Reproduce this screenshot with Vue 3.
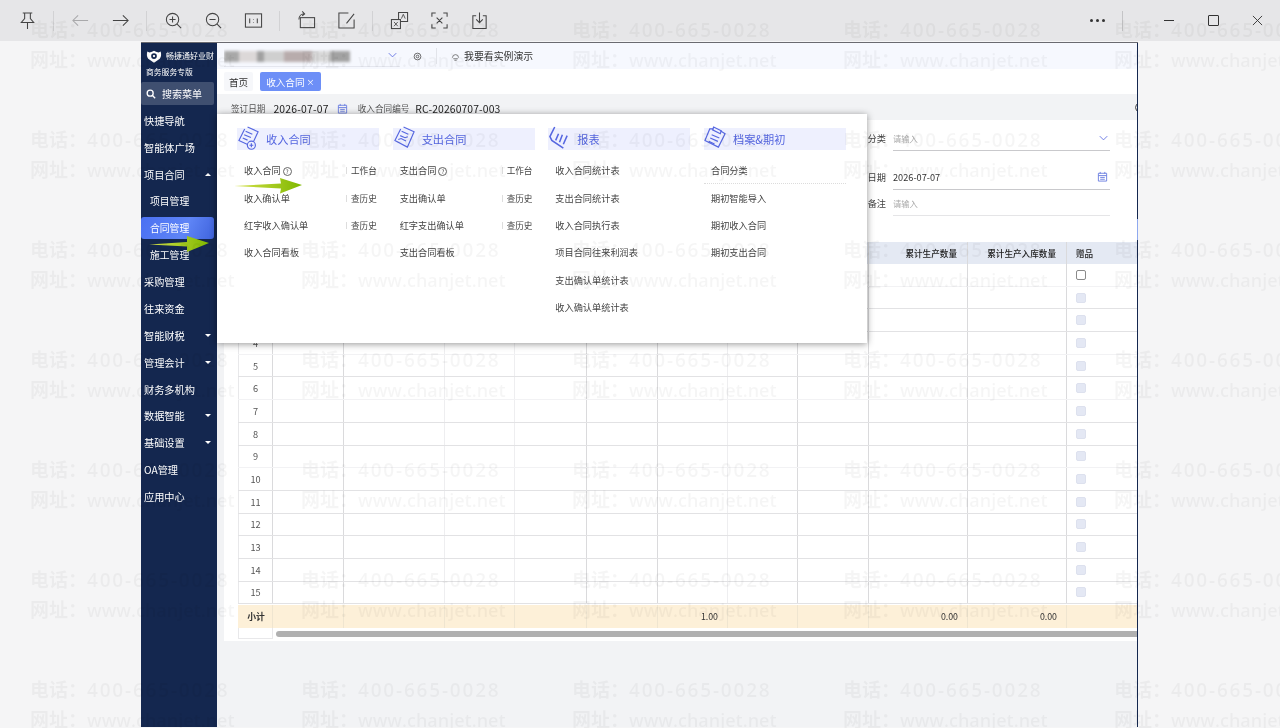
<template>
  <div class="viewer">
    <!-- viewer toolbar -->
    <div class="toolbar">
      <button class="tool">
        <svg viewBox="0 0 20 20"><path d="M5 2h10M7 2v6l-3.500 4h13L13 8V2M10 12v7" /></svg>
      </button>
      <i class="sep"></i>
      <button class="tool muted">
        <svg viewBox="0 0 20 20"><path d="M18 10H2M7.500 4.500 2 10l5.500 5.500" /></svg>
      </button>
      <button class="tool">
        <svg viewBox="0 0 20 20"><path d="M2 10h16M12.500 4.500 18 10l-5.500 5.500" /></svg>
      </button>
      <i class="sep"></i>
      <button class="tool">
        <svg viewBox="0 0 20 20"><circle cx="9" cy="9" r="6.500" /><path d="M9 5.800v6.400M5.800 9h6.400M13.800 13.800 18 18" /></svg>
      </button>
      <button class="tool">
        <svg viewBox="0 0 20 20"><circle cx="9" cy="9" r="6.500" /><path d="M5.800 9h6.400M13.800 13.800 18 18" /></svg>
      </button>
      <button class="tool">
        <svg viewBox="0 0 20 20"><rect x="1.500" y="3" width="17" height="14" /><path d="M6 8v5M14 8v5M10 8.500v.5M10 11.500v.5" /></svg>
      </button>
      <i class="sep"></i>
      <button class="tool">
        <svg viewBox="0 0 20 20"><rect x="3.500" y="7" width="15" height="10.500" /><path d="M2 9C2 5 4.500 3 8 3M5.500 .5 8 3 5.500 5" /></svg>
      </button>
      <button class="tool">
        <svg viewBox="0 0 20 20"><path d="M18 9v9H2V2h10M18 3l-8 10" /></svg>
      </button>
      <i class="sep"></i>
      <button class="tool">
        <svg viewBox="0 0 20 20"><path d="M9 9V1.500h9.500V11H11" /><rect x="1.500" y="9" width="9.500" height="9.500" /><path d="M12 8l2-4.500L16 8M4.200 11.500l4 4.500M8.200 11.500l-4 4.500" stroke-width=".9" /></svg>
      </button>
      <button class="tool">
        <svg viewBox="0 0 20 20"><path d="M2 6V2h4M14 2h4v4M18 14v4h-4M6 18H2v-4M7 7l6 6M13 7l-6 6" /></svg>
      </button>
      <button class="tool">
        <svg viewBox="0 0 20 20"><path d="M6.500 5H3v13.500h14V5h-3.500M10 1.500V12M6.500 8.800 10 12.300l3.500-3.500" /></svg>
      </button>
      <button class="tool dots"><b></b><b></b><b></b></button>
      <i class="sep sep-right"></i>
      <button class="win"><span class="win-min"></span></button>
      <button class="win"><span class="win-max"></span></button>
      <button class="win">
        <svg viewBox="0 0 12 12"><path d="M1 1l10 10M11 1 1 11" /></svg>
      </button>
    </div>

    <div class="stage">
      <div class="doc">
        <!-- left navigation -->
        <aside class="sidebar">
          <div class="brand">
            <div class="brand-top">
              <svg class="brand-logo" viewBox="0 0 18 14">
                <path d="M9 14 2.500 9.500C1 8 .5 5 1.500 1.500 3.500 3 5 2.500 9 .5c4 2 5.500 2.500 7.500 1 1 3.500.5 6.500-1 8z" fill="#fff" />
                <circle cx="9" cy="6.500" r="3.200" fill="#14274f" />
                <circle cx="9" cy="6.500" r="1.300" fill="#fff" />
              </svg>
              <span>畅捷通好业财</span>
            </div>
            <div class="brand-sub">商务服务专版</div>
          </div>
          <div class="search">
            <svg viewBox="0 0 12 12"><circle cx="5" cy="5" r="3.600" /><path d="M7.800 7.800 11 11" /></svg>
            <span>搜索菜单</span>
          </div>
          <nav class="nav">
            <div
              v-for="item in navItems"
              :key="item.label"
              class="nav-item"
              :class="{ sub: item.sub, active: item.active }"
            >
              <span>{{ item.label }}</span>
              <i v-if="item.caret" class="caret" :class="item.caret"></i>
            </div>
          </nav>
        </aside>

        <main class="main">
          <header class="topbar">
            <div class="company">
              <div class="company-blur"></div>
              <svg class="chev" viewBox="0 0 12 8"><path d="M1 1.500 6 6.500l5-5" /></svg>
            </div>
            <svg class="gear" viewBox="0 0 12 12"><circle cx="6" cy="6" r="4.500" /><circle cx="6" cy="6" r="1.800" /></svg>
            <i class="top-sep"></i>
            <svg class="bulb" viewBox="0 0 12 12"><path d="M2 7.500a4 4 0 1 1 8 0M3 9h6M4.500 11h3" /></svg>
            <span class="demo">我要看实例演示</span>
          </header>

          <div class="tabs">
            <span class="tab">首页</span>
            <span class="tab tab-on">收入合同 <small>×</small></span>
          </div>

          <div class="meta">
            <span class="meta-label">签订日期</span>
            <span class="meta-value date">2026-07-07</span>
            <svg class="cal" viewBox="0 0 12 12"><path d="M1.500 2.500h9v8.500h-9zM1.500 5h9M3.500 1v2M8.500 1v2M3.500 7h5M3.500 9h5" /></svg>
            <span class="meta-label no">收入合同编号</span>
            <span class="meta-value">RC-20260707-003</span>
            <i class="meta-clip"></i>
          </div>

          <section class="panel">
            <div class="form">
              <div class="field f1">
                <label>合同分类</label>
                <div class="input ph">请输入
                  <svg class="chev" viewBox="0 0 12 8"><path d="M1 1.500 6 6.500l5-5" /></svg>
                </div>
              </div>
              <div class="field f2">
                <label>签约日期</label>
                <div class="input">2026-07-07
                  <svg class="cal" viewBox="0 0 12 12"><path d="M1.500 2.500h9v8.500h-9zM1.500 5h9M3.500 1v2M8.500 1v2M3.500 7h5M3.500 9h5" /></svg>
                </div>
              </div>
              <div class="field f3">
                <label>备注</label>
                <div class="input ph thin">请输入</div>
              </div>
            </div>

            <div class="table">
              <div class="row head">
                <div
                  v-for="(c, i) in columns"
                  :key="i"
                  class="cell"
                  :class="{ faint: c.faint, end: c.end }"
                  :style="{ width: c.w + 'px' }"
                >{{ c.title }}</div>
              </div>
              <div v-for="n in 15" :key="n" class="row body" :class="{ soft: softRows.includes(n) }">
                <div v-for="(c, i) in columns" :key="i" class="cell" :class="{ faint: c.faint }" :style="{ width: c.w + 'px' }">
                  <template v-if="i === 0">{{ n }}</template>
                  <i v-else-if="i === 11" class="check" :class="{ open: n === 1 }"></i>
                </div>
              </div>
              <div class="row total">
                <div v-for="(c, i) in columns" :key="i" class="cell" :class="{ faint: c.faint }" :style="{ width: c.w + 'px' }">{{ c.total }}</div>
              </div>
              <div class="scroll-row">
                <div class="scroll-cell"></div>
                <div class="scroll-thumb"></div>
              </div>
            </div>
          </section>
        </main>
        <div class="edge"></div>

        <!-- dropdown over the page -->
        <div class="popup">
          <div v-for="group in groups" :key="group.title" class="group">
            <div class="group-head">
              <svg viewBox="0 0 24 26" v-html="group.icon"></svg>
              <span>{{ group.title }}</span>
            </div>
            <div
              v-for="row in group.rows"
              :key="row.label"
              class="group-row"
              :class="{ dashed: row.dashed }"
            >
              <span>{{ row.label }}<i v-if="row.help" class="help">?</i></span>
              <span v-if="row.action" class="action">{{ row.action }}</span>
            </div>
          </div>
        </div>

        <svg class="arrow arrow-a" viewBox="0 0 70 18">
          <defs>
            <linearGradient id="ga" x1="0" x2="1" y1="0" y2="0">
              <stop offset="0" stop-color="#d6e24a" />
              <stop offset="1" stop-color="#7fb800" />
            </linearGradient>
          </defs>
          <path d="M0 9 47 6.500 46 1 68 8 46 16.500 47 11.500z" fill="url(#ga)" />
        </svg>
        <svg class="arrow arrow-b" viewBox="0 0 70 18">
          <path d="M0 9.500 38 7 38 1 60 8 38 17 38 11.500z" fill="url(#ga)" />
        </svg>
      </div>
    </div>

    <!-- watermark across the whole screen -->
    <div class="watermark">
      <div v-for="n in 35" :key="n" class="mark">
        <div class="mark-tel"><span>电话：</span>400-665-0028</div>
        <div class="mark-web"><span>网址：</span>www.chanjet.net</div>
      </div>
    </div>
  </div>
</template>

<script setup>
const navItems = [
  { label: '快捷导航' },
  { label: '智能体广场' },
  { label: '项目合同', caret: 'up' },
  { label: '项目管理', sub: true },
  { label: '合同管理', sub: true, active: true },
  { label: '施工管理', sub: true },
  { label: '采购管理' },
  { label: '往来资金' },
  { label: '智能财税', caret: 'down' },
  { label: '管理会计', caret: 'down' },
  { label: '财务多机构' },
  { label: '数据智能', caret: 'down' },
  { label: '基础设置', caret: 'down' },
  { label: 'OA管理' },
  { label: '应用中心' },
]

const columns = [
  { w: 35, total: '小计' },
  { w: 71 },
  { w: 101, faint: true },
  { w: 70, faint: true },
  { w: 72 },
  { w: 71 },
  { w: 70, total: '1.00', faint: true },
  { w: 70 },
  { w: 71 },
  { w: 99, title: '累计生产数量', total: '0.00', end: true },
  { w: 99, title: '累计生产入库数量', total: '0.00', end: true },
  { w: 80, title: '赠品' },
]

const softRows = [1, 4, 6, 9]

const docLines = '<path d="M9 5.500l7 3M7.500 9l7 3M6 12.500l5 2.200"/>'
const groups = [
  {
    title: '收入合同',
    icon: `<path d="M11 1 22 6 15 21 2 15 8 3"/>${docLines}<circle cx="15" cy="20" r="4.200" fill="#eef0fe"/><path d="M15 18v4M13 20h4"/>`,
    rows: [
      { label: '收入合同', help: true, action: '工作台' },
      { label: '收入确认单', action: '查历史' },
      { label: '红字收入确认单', action: '查历史' },
      { label: '收入合同看板' },
    ],
  },
  {
    title: '支出合同',
    icon: '<path d="M11 1 22 6 15 22 2 15 8 3"/><path d="M9 5.500l7 3M7.500 10l5 2.200 3-1M5.500 14l3-1 5 2.500"/>',
    rows: [
      { label: '支出合同', help: true, action: '工作台' },
      { label: '支出确认单', action: '查历史' },
      { label: '红字支出确认单', action: '查历史' },
      { label: '支出合同看板' },
    ],
  },
  {
    title: '报表',
    icon: '<path d="M7 1 2 11l2 4 12 8M8 15l3-7M12 17l3-8M16 19l4-9" stroke-width="1.600"/>',
    rows: [
      { label: '收入合同统计表' },
      { label: '支出合同统计表' },
      { label: '收入合同执行表' },
      { label: '项目合同往来利润表' },
      { label: '支出确认单统计表' },
      { label: '收入确认单统计表' },
    ],
  },
  {
    title: '档案&期初',
    icon: '<path d="M10 3 6 3 1 15l14 7 7-14-5-3"/><path d="M10 1l8 4-1 3-8-4zM8 9l8 3.500M6.500 12.500l8 3.500M5 16l6 2.800"/>',
    rows: [
      { label: '合同分类', dashed: true },
      { label: '期初智能导入' },
      { label: '期初收入合同' },
      { label: '期初支出合同' },
    ],
  },
]
</script>

<style>
html,
body {
  margin: 0;
  background: #f5f5f6;
}
body {
  font-family: "Noto Sans CJK SC", "Noto Sans", sans-serif;
}
</style>

<style scoped>
.viewer {
  position: relative;
  width: 1280px;
  height: 728px;
  overflow: hidden;
  display: flex;
  flex-direction: column;
  background: #f5f5f6;
  color: #333;
  filter: blur(0.4px);
}

/* toolbar */
.toolbar {
  flex: none;
  height: 41px;
  padding-left: 7px;
  display: flex;
  align-items: center;
  background: #e6e6e8;
}
.tool {
  flex: none;
  width: 40px;
  height: 30px;
  padding: 0;
  border: 0;
  background: none;
  display: flex;
  align-items: center;
  justify-content: center;
}
.tool svg {
  width: 19px;
  height: 19px;
  fill: none;
  stroke: #444;
  stroke-width: 1.100;
}
.tool.muted svg {
  stroke: #a9a9ab;
}
.sep {
  flex: none;
  width: 1px;
  height: 20px;
  margin: 0 6px;
  background: #d2d2d4;
}
.dots {
  margin-left: auto;
  gap: 3px;
}
.dots b {
  width: 3px;
  height: 3px;
  border-radius: 50%;
  background: #333;
}
.sep-right {
  margin: 0 24px 0 5px;
  background: #c4c4c6;
}
.win {
  flex: none;
  width: 44px;
  height: 30px;
  padding: 0;
  border: 0;
  background: none;
  display: flex;
  align-items: center;
  justify-content: center;
}
.win:last-child {
  margin-right: 1px;
}
.win svg {
  width: 11px;
  height: 11px;
  fill: none;
  stroke: #333;
}
.win-min {
  width: 10px;
  height: 1px;
  background: #333;
}
.win-max {
  width: 9px;
  height: 9px;
  border: 1px solid #333;
  border-radius: 1px;
}

/* document */
.stage {
  flex: 1;
  padding: 1px 0 1px 141px;
  min-height: 0;
  display: flex;
}
.doc {
  position: relative;
  width: 997px;
  display: flex;
  border-top: 1px solid #6a6a70;
}

.sidebar {
  flex: none;
  width: 76px;
  background: #14274f;
  color: #fff;
}
.brand {
  height: 39px;
  padding: 6px 0 0 5px;
  box-sizing: border-box;
}
.brand-top {
  display: flex;
  align-items: center;
  gap: 4px;
  font-size: 8px;
  line-height: 14px;
  white-space: nowrap;
}
.brand-logo {
  flex: none;
  width: 16px;
  height: 13px;
}
.brand-sub {
  margin-top: 3px;
  font-size: 7.800px;
  line-height: 12px;
}
.search {
  height: 23px;
  width: 73px;
  display: flex;
  align-items: center;
  gap: 6px;
  padding-left: 5px;
  box-sizing: border-box;
  background: #3f4f70;
  border-radius: 2px;
  font-size: 10px;
}
.search svg {
  width: 10px;
  height: 10px;
  fill: none;
  stroke: #fff;
  stroke-width: 1.600;
}
.nav {
  margin-top: 2.200px;
}
.nav-item {
  position: relative;
  height: 26.850px;
  padding-left: 3px;
  display: flex;
  align-items: center;
  font-size: 10.200px;
}
.nav-item.sub {
  padding-left: 9px;
  font-size: 9.800px;
}
.nav-item.active {
  height: 21.850px;
  margin: 2.500px 3px 2.500px 0;
  border-radius: 3px;
  background: linear-gradient(115deg, #4a70f2 0%, #5f85f6 60%, #3f63dd 100%);
}
.caret {
  position: absolute;
  left: 64px;
  top: 12px;
  border-left: 3px solid transparent;
  border-right: 3px solid transparent;
}
.caret.up {
  border-bottom: 3px solid #fff;
}
.caret.down {
  border-top: 3px solid #fff;
}

.main {
  flex: none;
  width: 920px;
  display: flex;
  flex-direction: column;
  overflow: hidden;
  background: #f2f3f5;
}
.edge {
  flex: none;
  width: 1px;
  background: linear-gradient(#14274f 0, #14274f 176px, #8fa9ef 176px, #8fa9ef 197px, #14274f 197px);
}

.topbar {
  flex: none;
  height: 26px;
  display: flex;
  align-items: center;
  background: #f6f8fe;
  font-size: 9.900px;
}
.company {
  position: relative;
  width: 176px;
  height: 22px;
  margin-left: 7px;
  overflow: hidden;
  border-bottom: 1px solid #e4e6ee;
  box-sizing: border-box;
}
.company-blur {
  width: 126px;
  height: 11px;
  margin-top: 6px;
  filter: blur(1.500px);
  background: linear-gradient(90deg, #a8a8a8 0 12%, #dcd8d8 12% 26%, #a0a0a0 26% 32%, #cfcfcf 32% 48%, #b8acac 48% 70%, #d8d8d8 70% 84%, #a2a2a2 84% 100%);
}
.company .chev {
  position: absolute;
  right: 3px;
  top: 7px;
}
.chev {
  width: 9px;
  height: 6px;
  fill: none;
  stroke: #5566e0;
  stroke-width: 1.100;
}
.gear {
  width: 9px;
  height: 9px;
  margin-left: 13px;
  fill: none;
  stroke: #444;
}
.top-sep {
  width: 1px;
  height: 16px;
  margin: 0 14px;
  background: #e2e4ea;
}
.bulb {
  width: 9px;
  height: 9px;
  margin-right: 4px;
  fill: none;
  stroke: #555;
}
.demo {
  color: #333;
}

.tabs {
  flex: none;
  height: 25px;
  padding-left: 7px;
  display: flex;
  align-items: center;
  gap: 7px;
  background: #fff;
}
.tab {
  height: 19px;
  padding: 0 5px;
  display: flex;
  align-items: center;
  gap: 2px;
  font-size: 9.600px;
  border-radius: 2px;
  background: #f6f7fa;
}
.tab small {
  font-size: 8px;
}
.tab-on {
  padding: 0 6px;
  background: #6d8ff7;
  color: #fff;
}

.meta {
  flex: none;
  height: 26px;
  padding: 2px 0 0 14px;
  box-sizing: border-box;
  display: flex;
  align-items: center;
  font-size: 10.400px;
}
.meta-label {
  font-size: 8.600px;
  color: #555;
}
.meta-value {
  margin-left: 6px;
  color: #222;
  letter-spacing: .1px;
}
.meta-value.date {
  margin-left: 8px;
  letter-spacing: .2px;
}
.meta .cal {
  margin-left: 8px;
}
.cal {
  width: 11px;
  height: 11px;
  fill: none;
  stroke: #6b7fe0;
}
.meta-label.no {
  margin-left: 10px;
}
.meta-clip {
  width: 9px;
  height: 9px;
  margin: -2px -7px 0 auto;
  border: 1px solid #444;
  border-radius: 50%;
  box-sizing: border-box;
}

.panel {
  flex: none;
  height: 521px;
  margin-left: 7px;
  padding-left: 14px;
  overflow: hidden;
  background: #fff;
}
.form {
  height: 122px;
  margin-left: 600px;
  width: 272px;
}
.field {
  display: flex;
  font-size: 9.200px;
  color: #444;
}
.field label {
  width: 48px;
  flex: none;
  text-align: right;
  margin-right: 7px;
  align-self: flex-end;
  line-height: 25px;
}
.input {
  flex: 1;
  height: 25px;
  padding: 0 2px 0 0;
  box-sizing: content-box;
  display: flex;
  align-items: center;
  justify-content: space-between;
  border-bottom: 1px solid #c9c9cc;
  color: #333;
  font-size: 9.200px;
}
.input.ph {
  color: #aaa;
  font-size: 8.300px;
}
.input.thin {
  border-bottom-color: #e5e5e7;
}
.f1 {
  padding-top: 5px;
}
.f2 {
  padding-top: 13px;
}

.table {
  width: 900px;
  font-size: 9.200px;
}
.row {
  display: flex;
}
.cell {
  flex: none;
  box-sizing: border-box;
  border-right: 1px solid #dadadc;
  display: flex;
  align-items: center;
  overflow: hidden;
  white-space: nowrap;
}
.cell.faint {
  border-right-color: #eeeef0;
}
.head {
  height: 22px;
  background: #e4e9f3;
  font-weight: 500;
  color: #222;
}
.head .cell {
  justify-content: center;
  font-size: 8.600px;
}
.head .cell.end {
  justify-content: flex-end;
  padding-right: 10px;
}
.head .cell:last-child {
  justify-content: flex-start;
  padding-left: 9px;
}
.body {
  height: 22.700px;
  box-sizing: border-box;
  border-bottom: 1px solid #e2e2e4;
  color: #555;
}
.body.soft {
  border-bottom-color: #f2f2f4;
}
.body .cell:first-child {
  justify-content: center;
  border-left: 1px solid #e8e8ea;
}
.body .cell:last-child {
  padding-left: 9px;
}
.check {
  width: 10px;
  height: 10px;
  box-sizing: border-box;
  border-radius: 2px;
  background: #e4e8f4;
  border: 1px solid #dde1ee;
}
.check.open {
  background: #fff;
  border-color: #8a8a8a;
}
.total {
  height: 23px;
  margin-top: 1px;
  background: #fdf0d8;
  color: #333;
  font-size: 8.800px;
}
.total .cell {
  justify-content: flex-end;
  padding-right: 9px;
  border-right-color: #efe5d0;
}
.total .cell:first-child {
  justify-content: center;
  padding: 0 0 0 2px;
  font-weight: 700;
}
.scroll-row {
  height: 12px;
  display: flex;
}
.scroll-cell {
  width: 35px;
  height: 11px;
  box-sizing: border-box;
  border: 1px solid #e8e8ea;
  border-top: 0;
}
.scroll-thumb {
  flex: 1;
  height: 6px;
  margin: 3px 0 0 3px;
  border-radius: 3px 0 0 3px;
  background: #b0b0b0;
}

/* dropdown */
.popup {
  position: absolute;
  left: 76px;
  top: 71px;
  width: 650px;
  height: 229px;
  padding: 14px 21px 0 20px;
  box-sizing: border-box;
  display: grid;
  grid-template-columns: repeat(4, 142px);
  column-gap: 13.670px;
  align-items: start;
  background: #fff;
  box-shadow: 0 1px 7px rgba(0, 0, 0, .42);
}
.group-head {
  position: relative;
  height: 22px;
  margin-bottom: 6.500px;
  padding-left: 29px;
  display: flex;
  align-items: center;
  background: #eef0fe;
  color: #5566e0;
  font-size: 11.200px;
}
.group-head svg {
  position: absolute;
  left: 0;
  top: -2px;
  width: 23px;
  height: 25px;
  overflow: visible;
  fill: none;
  stroke: #5566e0;
  stroke-width: 1.200;
}
.group-row {
  height: 27.400px;
  padding-left: 7px;
  box-sizing: border-box;
  display: flex;
  align-items: center;
  justify-content: space-between;
  font-size: 9.200px;
  color: #444;
  white-space: nowrap;
}
.group-row.dashed {
  border-bottom: 1px dotted #dcdcdc;
}
.help {
  display: inline-block;
  width: 7px;
  height: 7px;
  margin-left: 2px;
  border: 1px solid #666;
  border-radius: 50%;
  font-size: 6px;
  font-style: normal;
  line-height: 7px;
  text-align: center;
}
.action {
  position: relative;
  width: 28px;
  font-size: 8.600px;
}
.action::before {
  content: '';
  position: absolute;
  left: -5px;
  top: 3px;
  height: 7px;
  border-left: 1px solid #ddd;
}

.arrow {
  position: absolute;
  width: 70px;
  height: 18px;
}
.arrow-a {
  left: 93px;
  top: 134px;
}
.arrow-b {
  left: 8px;
  top: 192px;
}

.watermark {
  position: absolute;
  inset: 0;
  padding: 15px 0 0 30px;
  display: grid;
  grid-template-columns: repeat(5, 271px);
  grid-auto-rows: 110px;
  pointer-events: none;
  font-family: "Open Sans", "Noto Sans CJK SC", sans-serif;
  font-weight: 600;
  line-height: 30px;
  white-space: nowrap;
  color: rgba(0, 0, 0, .04);
}
.mark-tel {
  font-size: 19px;
  letter-spacing: 1.800px;
}
.mark-web {
  font-size: 18px;
}
.mark span {
  font-size: 19px;
  letter-spacing: 0;
}
</style>
